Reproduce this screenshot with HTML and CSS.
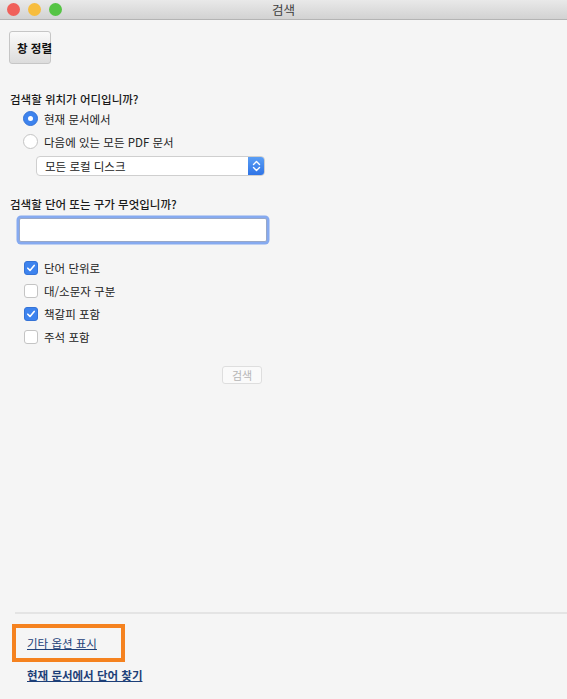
FILE: index.html
```html
<!DOCTYPE html>
<html lang="ko">
<head>
    <meta charset="UTF-8">
    <meta name="viewport" content="width=device-width, initial-scale=1.0">
    <title>검색</title>
    <link rel="stylesheet" href="styles.css">
</head>
<body>
    <div class="window">
        <div class="titlebar">
            <div class="lights">
                <span class="light red"></span>
                <span class="light yellow"></span>
                <span class="light green"></span>
            </div>
            <div class="title">검색</div>
            <div></div>
        </div>

        <div class="content">
            <button class="arrange-button">창 정렬</button>

            <div class="section">
                <div class="question">검색할 위치가 어디입니까?</div>
                <div class="option">
                    <span class="radio checked"></span>
                    <span>현재 문서에서</span>
                </div>
                <div class="option">
                    <span class="radio"></span>
                    <span>다음에 있는 모든 PDF 문서</span>
                </div>
                <div class="select">
                    <span class="select-text">모든 로컬 디스크</span>
                    <span class="stepper">
                        <svg width="9" height="12" viewBox="0 0 9 12">
                            <path d="M1.5 4.5 L4.5 1.5 L7.5 4.5 M1.5 7.5 L4.5 10.5 L7.5 7.5" fill="none" stroke="#fff" stroke-width="1.4" stroke-linecap="round" stroke-linejoin="round"/>
                        </svg>
                    </span>
                </div>
            </div>

            <div class="section">
                <div class="question">검색할 단어 또는 구가 무엇입니까?</div>
                <input class="search-input" type="text">
                <div class="checks">
                    <div class="option">
                        <span class="checkbox checked"><svg width="10" height="10" viewBox="0 0 10 10"><path d="M1.8 5.2 L4 7.4 L8.2 2.4" fill="none" stroke="#fff" stroke-width="1.6" stroke-linecap="round" stroke-linejoin="round"/></svg></span>
                        <span>단어 단위로</span>
                    </div>
                    <div class="option">
                        <span class="checkbox"></span>
                        <span>대/소문자 구분</span>
                    </div>
                    <div class="option">
                        <span class="checkbox checked"><svg width="10" height="10" viewBox="0 0 10 10"><path d="M1.8 5.2 L4 7.4 L8.2 2.4" fill="none" stroke="#fff" stroke-width="1.6" stroke-linecap="round" stroke-linejoin="round"/></svg></span>
                        <span>책갈피 포함</span>
                    </div>
                    <div class="option">
                        <span class="checkbox"></span>
                        <span>주석 포함</span>
                    </div>
                </div>
                <div class="search-row">
                    <button class="search-button" disabled>검색</button>
                </div>
            </div>

            <div class="footer">
                <div class="highlight">
                    <a class="link" href="#">기타 옵션 표시</a>
                </div>
                <a class="link bold" href="#">현재 문서에서 단어 찾기</a>
            </div>
        </div>
    </div>
</body>
</html>
```

FILE: styles.css
```css
html, body {
    margin: 0;
    padding: 0;
}
body {
    font-family: "Noto Sans CJK KR", "Noto Sans", "Liberation Sans", sans-serif;
    font-size: 11.5px;
    color: #222;
    background: #f5f5f5;
}
.window {
    width: 567px;
    height: 699px;
    display: flex;
    flex-direction: column;
    overflow: hidden;
}
.titlebar {
    height: 19px;
    display: grid;
    grid-template-columns: 1fr auto 1fr;
    align-items: center;
    background: linear-gradient(#e9e9e9, #d2d2d2);
    border-bottom: 1px solid #b4b4b4;
}
.lights {
    display: flex;
    gap: 8px;
    padding-left: 7px;
}
.light {
    width: 13px;
    height: 13px;
    border-radius: 50%;
}
.red { background: #f0605a; }
.yellow { background: #f7bd3e; }
.green { background: #55c444; }
.title {
    font-size: 12.5px;
    color: #3c3c3c;
}
.content {
    flex: 1;
    display: flex;
    flex-direction: column;
    padding: 11px 0 0 0;
}
.arrange-button {
    align-self: flex-start;
    margin-left: 9px;
    width: 42px;
    height: 33px;
    padding: 0 0 0 7px;
    text-align: left;
    white-space: nowrap;
    overflow: visible;
    font-family: inherit;
    font-size: 11.5px;
    font-weight: bold;
    color: #111;
    background: linear-gradient(#fafafa, #dcdcdc);
    border: 1px solid #c6c6c6;
    border-radius: 3px;
}
.section {
    padding-left: 10px;
    display: flex;
    flex-direction: column;
}
.section:first-of-type {
    margin-top: 27px;
}
.question {
    font-weight: 500;
    color: #1a1a1a;
    line-height: 16px;
}
.option {
    display: flex;
    align-items: center;
    gap: 6px;
    height: 23px;
    padding-left: 13px;
}
.radio {
    width: 13px;
    height: 13px;
    border-radius: 50%;
    background: #fff;
    border: 1px solid #c4c4c4;
    display: flex;
    align-items: center;
    justify-content: center;
}
.radio.checked {
    background: #3d83ee;
    border-color: #3573d6;
}
.radio.checked::after {
    content: "";
    width: 5px;
    height: 5px;
    border-radius: 50%;
    background: #fff;
}
.select {
    margin: 3px 0 0 26px;
    width: 227px;
    height: 18px;
    display: flex;
    align-items: center;
    justify-content: space-between;
    background: #fff;
    border: 1px solid #cfcfcf;
    border-radius: 4px;
    overflow: hidden;
}
.select-text {
    padding-left: 8px;
}
.stepper {
    width: 16px;
    height: 18px;
    background: linear-gradient(#5a9ef5, #2f74e6);
    display: flex;
    align-items: center;
    justify-content: center;
}
.section + .section {
    margin-top: 20px;
}
.search-input {
    margin: 6px 0 0 9px;
    width: 246px;
    height: 22px;
    box-sizing: content-box;
    padding: 0;
    border: 1px solid #98a8c8;
    background: #fff;
    box-shadow: 0 0 0 2.5px #86aaf0;
    border-radius: 2px;
    outline: none;
}
.checks {
    margin-top: 14px;
    padding-left: 1px;
}
.checkbox {
    width: 12px;
    height: 12px;
    border: 1px solid #c4c4c4;
    background: #fff;
    border-radius: 3px;
    display: flex;
    align-items: center;
    justify-content: center;
}
.checkbox.checked {
    background: #3d83ee;
    border-color: #3573d6;
}
.search-row {
    margin-top: 18px;
    padding-left: 212px;
}
.search-button {
    width: 40px;
    height: 18px;
    padding: 0;
    font-family: inherit;
    font-size: 11px;
    color: #b5b5b5;
    background: #fafafa;
    border: 1px solid #dedede;
    border-radius: 3px;
}
.footer {
    margin-top: auto;
    margin-left: 15px;
    border-top: 2px solid #e4e4e4;
    padding: 10px 0 16px 0;
    display: flex;
    flex-direction: column;
}
.highlight {
    margin-left: -3px;
    width: 94px;
    height: 30px;
    border: 4px solid #f5821f;
    display: flex;
    align-items: center;
    padding-left: 11px;
}
.link {
    color: #1d3f78;
    text-decoration: underline;
    font-size: 11.5px;
}
.footer > .link {
    margin: 5px 0 0 12px;
}
.bold {
    font-weight: bold;
}
```
